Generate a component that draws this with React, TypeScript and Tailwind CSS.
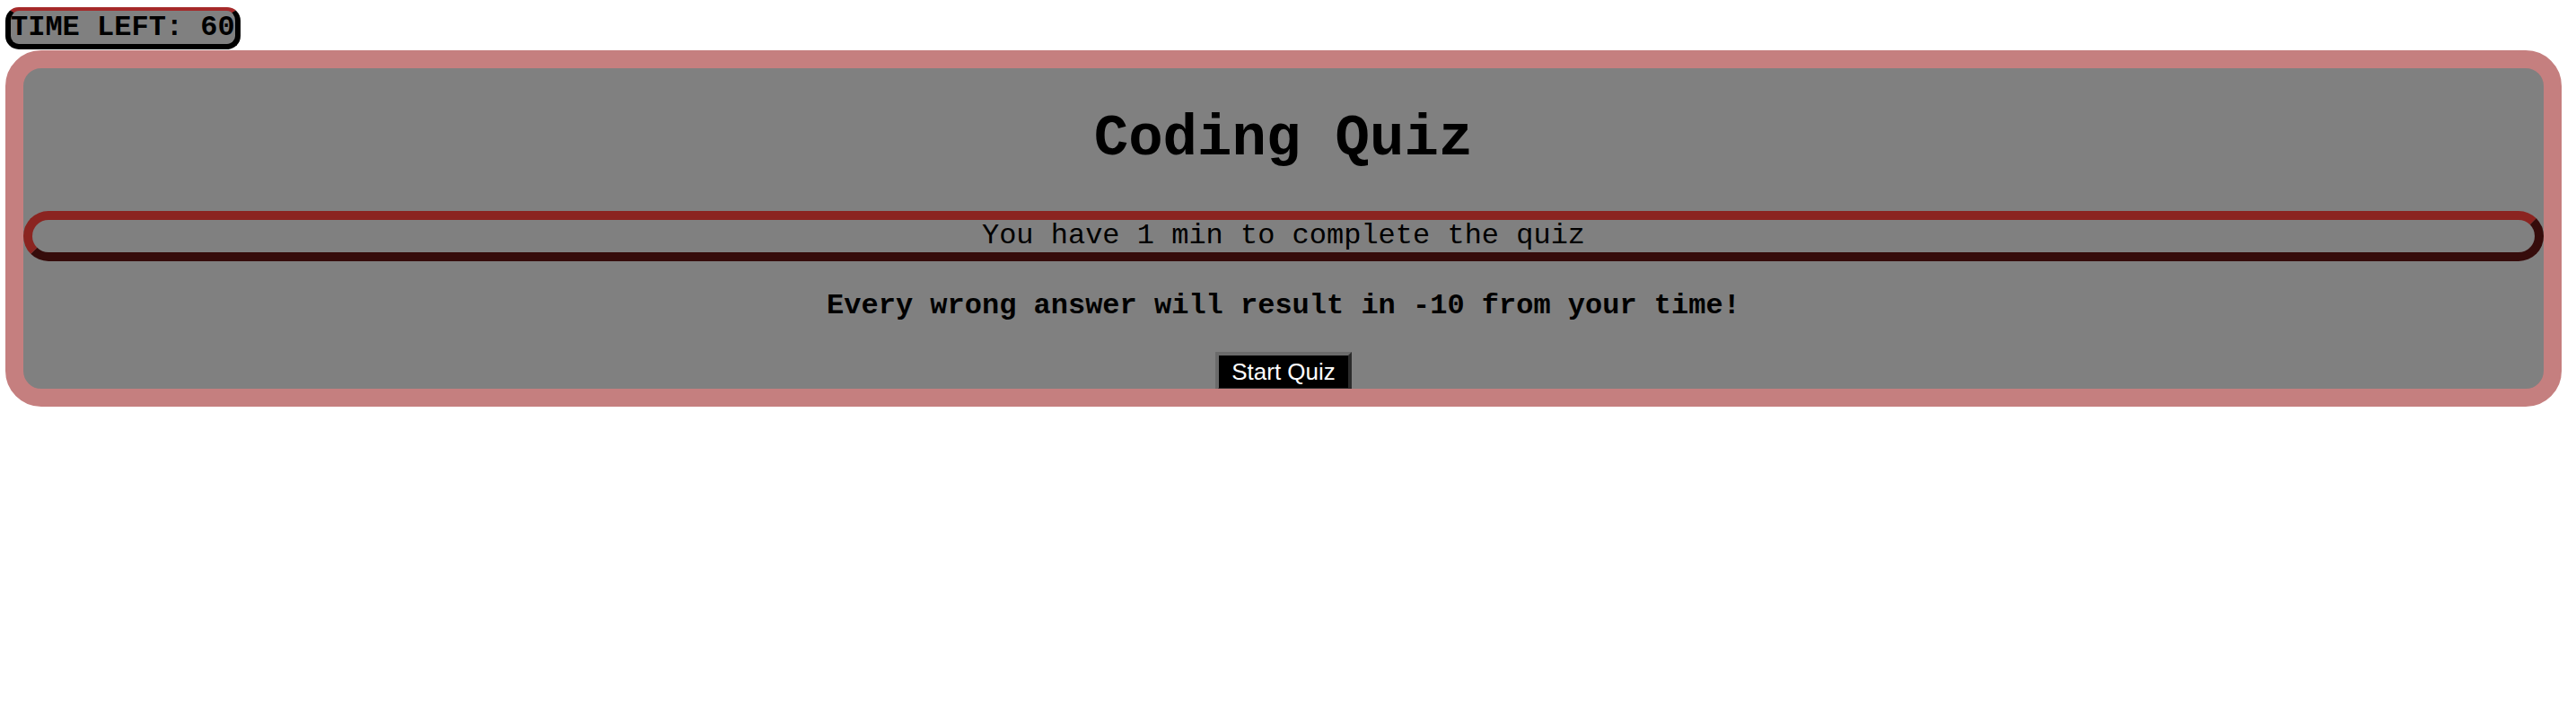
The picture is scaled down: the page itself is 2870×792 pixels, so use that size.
export default function App() {
  const mono = "font-['Courier_New','Liberation_Mono',monospace]";

  return (
    <div className="min-h-screen w-full bg-white pt-[8px] text-black">
      <div
        className={`ml-[6px] inline-block rounded-[15px] border-x-[6px] border-b-[6px] border-t-4 border-x-black border-b-black border-t-[#a52a2a] bg-[#808080] text-[32px] font-bold leading-[37px] ${mono}`}
      >
        TIME LEFT: 60
      </div>

      <div className="ml-[6px] mt-px w-[2848px] h-[397px] overflow-hidden rounded-[40px] border-[20px] border-[#c57f7f] bg-[#808080]">
        <div className="flex flex-col items-center">
          <h1 className={`mt-[43px] text-[64px] font-bold leading-[72px] ${mono}`}>
            Coding Quiz
          </h1>
          <p
            className={`mt-[44px] w-full rounded-full border-[10px] border-t-[#8b2420] border-l-[#8b2420] border-b-[#360c0b] border-r-[#360c0b] text-center text-[32px] leading-[36px] ${mono}`}
          >
            You have 1 min to complete the quiz
          </p>
          <p className={`mt-[32px] text-[32px] font-bold leading-[36px] ${mono}`}>
            Every wrong answer will result in -10 from your time!
          </p>
          <button
            className="mt-[33px] border-4 border-t-[#6b6b6b] border-l-[#6b6b6b] border-b-[#2b2b2b] border-r-[#2b2b2b] bg-black px-[14px] py-[3px] font-['Liberation_Sans',Arial,sans-serif] text-[26px] leading-[30px] text-white"
          >
            Start Quiz
          </button>
        </div>
      </div>
    </div>
  );
}
